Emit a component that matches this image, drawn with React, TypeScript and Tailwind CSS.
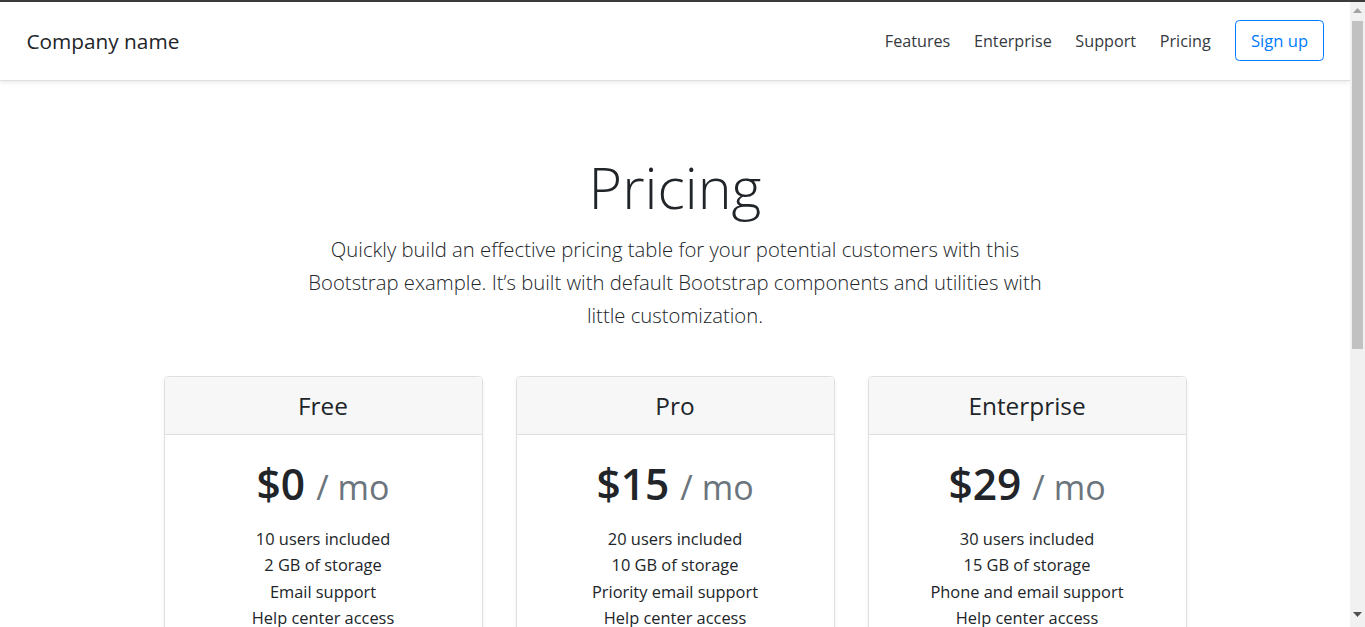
import React from 'react';

const PLANS = [
  {
    name: 'Free',
    price: '$0',
    features: ['10 users included', '2 GB of storage', 'Email support', 'Help center access'],
    cta: 'Sign up for free',
    outline: true,
  },
  {
    name: 'Pro',
    price: '$15',
    features: ['20 users included', '10 GB of storage', 'Priority email support', 'Help center access'],
    cta: 'Get started',
    outline: false,
  },
  {
    name: 'Enterprise',
    price: '$29',
    features: ['30 users included', '15 GB of storage', 'Phone and email support', 'Help center access'],
    cta: 'Contact us',
    outline: false,
  },
];

const FOOTER = [
  { title: 'Features', links: ['Cool stuff', 'Random feature', 'Team feature', 'Stuff for developers', 'Another one', 'Last time'] },
  { title: 'Resources', links: ['Resource', 'Resource name', 'Another resource', 'Final resource'] },
  { title: 'About', links: ['Team', 'Locations', 'Privacy', 'Terms'] },
];

// window scrollbar as it appears in the screenshot
const Scrollbar: React.FC = () => (
  <div className="w-[15px] shrink-0 flex flex-col items-center bg-[#f1f1f1]">
    <div className="h-[17px] w-full flex items-center justify-center">
      <svg width="9" height="5" viewBox="0 0 9 5">
        <path d="M0 5 L4.5 0 L9 5 Z" fill="#a3a3a3" />
      </svg>
    </div>
    <div className="mt-[2px] w-[11px] h-[328px] bg-[#c1c1c1]" />
    <div className="flex-1" />
    <div className="h-[19px] w-full flex items-start justify-center pt-[4px]">
      <svg width="9" height="5" viewBox="0 0 9 5">
        <path d="M0 0 L9 0 L4.5 5 Z" fill="#505050" />
      </svg>
    </div>
  </div>
);

const App: React.FC = () => {
  return (
    <div className="h-screen flex flex-col overflow-hidden bg-white text-[#212529] font-['Open_Sans','Noto_Sans',sans-serif]">
      <div className="h-[2px] shrink-0 bg-[#3b3b3b]" />

      <div className="flex flex-1 min-h-0">
        <div className="flex-1 overflow-hidden">
          <header className="flex items-center px-[26.4px] py-[17px] mb-[17.6px] bg-white border-b border-[#dfdfdf] shadow-[0_2px_4px_rgba(0,0,0,0.075)]">
            <h5 className="mr-auto text-[20.8px] leading-[26px] font-normal">Company name</h5>
            <nav className="flex gap-[6px] mr-[16px] text-[16.2px] leading-[26px] text-[#343a40]">
              {['Features', 'Enterprise', 'Support', 'Pricing'].map((l) => (
                <a key={l} href="#" className="p-[8.8px]">
                  {l}
                </a>
              ))}
            </nav>
            <a href="#" className="px-[14.5px] py-[6.6px] text-[16.6px] leading-[26px] text-[#007bff] border border-[#007bff] rounded-[4.4px]">
              Sign up
            </a>
          </header>

          <div className="max-w-[770px] mx-auto px-[17.6px] pt-[52px] pb-[26.4px] text-center">
            <h1 className="mb-[8.8px] text-[57.4px] leading-[74px] font-light">Pricing</h1>
            <p className="mb-[17.6px] text-[20.3px] leading-[33px] font-light whitespace-nowrap">
              Quickly build an effective pricing table for your potential customers with this
              <br />
              Bootstrap example. It’s built with default Bootstrap components and utilities with
              <br />
              little customization.
            </p>
          </div>

          <div className="w-[1023px] mx-auto grid grid-cols-3 gap-[33px] mb-[17.6px] text-center">
            {PLANS.map((p) => (
              <div key={p.name} className="flex flex-col border border-[#dfdfdf] rounded-[4.4px] shadow-[0_2px_4px_rgba(0,0,0,0.05)] overflow-hidden">
                <div className="px-[22px] py-[13px] bg-[#f7f7f7] border-b border-[#dfdfdf]">
                  <h4 className="text-[24.4px] leading-[31px] font-normal">{p.name}</h4>
                </div>
                <div className="flex flex-col p-[22px]">
                  <h1 className="text-[42.5px] leading-[53px] font-semibold">
                    {p.price} <small className="text-[34px] font-normal text-[#6c757d]">/ mo</small>
                  </h1>
                  <ul className="mt-[12px] mb-[26.4px] text-[16.4px] leading-[26.3px]">
                    {p.features.map((f) => (
                      <li key={f}>{f}</li>
                    ))}
                  </ul>
                  <button
                    className={
                      p.outline
                        ? 'w-full px-[17.6px] py-[8.8px] text-[20.4px] leading-[33px] rounded-[5.3px] border border-[#007bff] text-[#007bff] bg-white'
                        : 'w-full px-[17.6px] py-[8.8px] text-[20.4px] leading-[33px] rounded-[5.3px] border border-[#007bff] text-white bg-[#007bff]'
                    }
                  >
                    {p.cta}
                  </button>
                </div>
              </div>
            ))}
          </div>

          <footer className="w-[1023px] mx-auto pt-[52.8px] my-[52.8px] border-t border-[#dee2e6] grid grid-cols-4 gap-[33px]">
            <div>
              <div className="w-[26px] h-[26px] mb-[8.8px] rounded-full border-2 border-[#6c757d]" />
              <small className="block text-[14px] text-[#6c757d]">© 2017-2018</small>
            </div>
            {FOOTER.map((c) => (
              <div key={c.title}>
                <h5 className="mb-[8.8px] text-[20.4px] font-medium">{c.title}</h5>
                <ul className="text-[14.4px] leading-[1.5]">
                  {c.links.map((l) => (
                    <li key={l}>
                      <a href="#" className="text-[#6c757d]">
                        {l}
                      </a>
                    </li>
                  ))}
                </ul>
              </div>
            ))}
          </footer>
        </div>

        <Scrollbar />
      </div>
    </div>
  );
};

export default App;
